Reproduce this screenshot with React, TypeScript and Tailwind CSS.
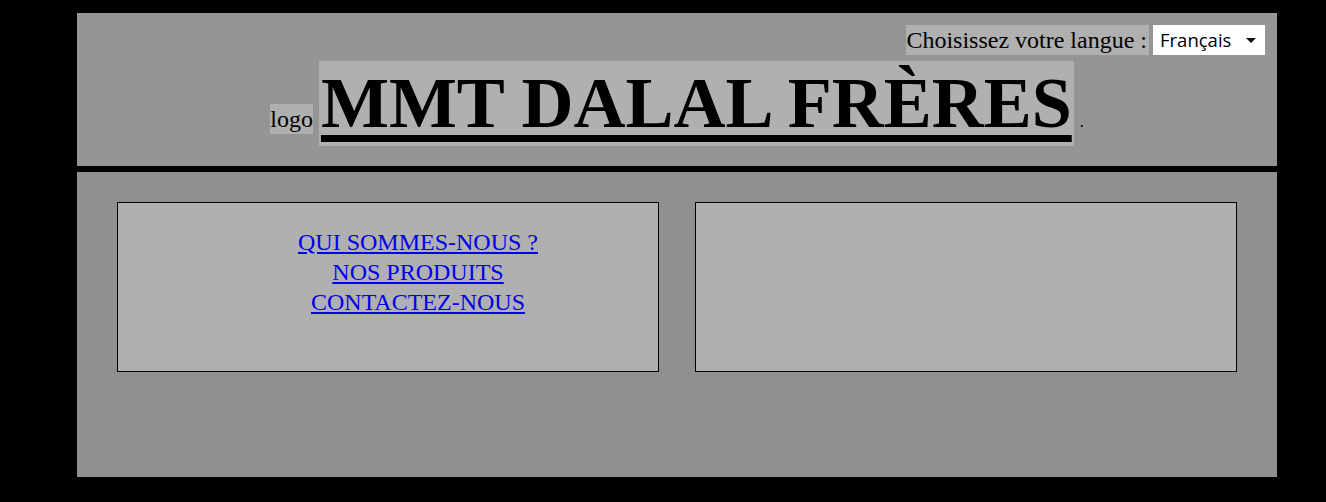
export default function App() {
  const serif = "font-['Liberation_Serif','Times_New_Roman',serif]";

  return (
    <div className="min-h-[502px] w-full bg-black pt-[13px] pl-[77px]">
      <div className={`w-[1200px] h-[464px] flex flex-col bg-[#909090] ${serif}`}>
        {/* Header */}
        <div className="bg-[#959595] border-b-[6px] border-black pt-[12px] pb-[20px]">
          <div className="flex justify-end items-center pr-[12px] h-[30px]">
            <span className="inline-block h-[30px] leading-[30px] bg-[#b0b0b0] text-[24px] text-black pr-[2px]">
              Choisissez votre langue :
            </span>
            <div className="ml-[4px] flex items-center h-[30px] w-[112px] bg-white pl-[7px] pr-[8px] font-['Open_Sans','Noto_Sans',sans-serif] text-[18.5px] text-black">
              <span className="flex-1 leading-[30px]">Français</span>
              <svg width="10" height="5" viewBox="0 0 10 5" className="mr-[1px]">
                <path d="M0 0h10L5 5z" fill="#111" />
              </svg>
            </div>
          </div>

          <div className="mt-[6px] flex justify-center items-baseline h-[85px]">
            <span className="inline-block h-[30px] leading-[30px] bg-[#b0b0b0] text-[24px] text-black">logo</span>
            <span className="inline-block w-[6px]" />
            <h1 className="inline-block h-[85px] leading-[85px] bg-[#b0b0b0] text-[72px] font-bold text-black underline decoration-[7px] underline-offset-[8px] px-[2px]">
              MMT DALAL FRÈRES
            </h1>
            <span className="text-[16px] leading-none text-black pl-[6px]">.</span>
          </div>
        </div>

        {/* Body */}
        <div className="flex gap-[36px] px-[40px] pt-[30px]">
          <div className="w-[542px] h-[170px] border border-black bg-[#b0b0b0] pl-[60px] pt-[24px]">
            <ul className="flex flex-col items-center text-[24px] leading-[30px]">
              <li>
                <a href="#" className="text-[#0000ee] underline">QUI SOMMES-NOUS ?</a>
              </li>
              <li>
                <a href="#" className="text-[#0000ee] underline">NOS PRODUITS</a>
              </li>
              <li>
                <a href="#" className="text-[#0000ee] underline">CONTACTEZ-NOUS</a>
              </li>
            </ul>
          </div>
          <div className="w-[542px] h-[170px] border border-black bg-[#b0b0b0]" />
        </div>
      </div>
    </div>
  );
}
